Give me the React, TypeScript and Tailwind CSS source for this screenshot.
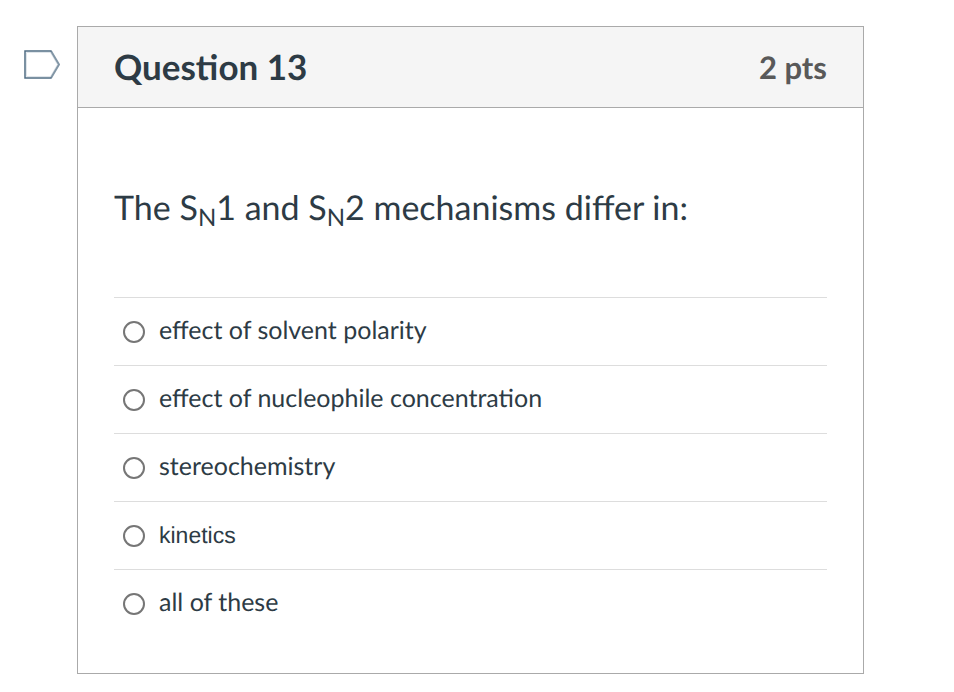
const answers = [
  { id: "solvent", text: "effect of solvent polarity" },
  { id: "nucleophile", text: "effect of nucleophile concentration" },
  { id: "stereo", text: "stereochemistry" },
  { id: "kinetics", text: "kinetics", plain: true },
  { id: "all", text: "all of these" },
];

function Sub({ children }: { children: string }) {
  return <sub className="text-[24px]">{children}</sub>;
}

export default function App() {
  return (
    <main className="flex items-start bg-white pt-[26px] pr-[90px] pb-[18px] pl-6 font-['Lato',sans-serif] text-[#2d3b45] antialiased [text-rendering:geometricPrecision]">
      {/* Flag toggle */}
      <button type="button" aria-label="Flag question" className="mt-6 mr-[17px] shrink-0">
        <svg width="36" height="29" viewBox="0 0 36 29" fill="none">
          <path d="M2.5 2.5H26.5L33.5 14.5L26.5 26.5H2.5Z" stroke="#dfe5ea" />
          <path d="M27 1L35 14.5L27 28" stroke="#8296a6" strokeWidth="2" />
          <path d="M27.5 1H1V28H27.5" stroke="#4f6c83" strokeWidth="1.5" />
        </svg>
      </button>

      <section className="min-w-0 grow border border-[#aaaaaa]">
        <header className="flex h-[81px] items-center justify-between border-b border-[#aaaaaa] bg-[#f5f5f5] px-9 font-bold">
          <h1 className="text-[35px]">Question 13</h1>
          <span className="text-[31px] text-[#595959]">2 pts</span>
        </header>

        <div className="px-9 pt-[75px] pb-9">
          <p id="prompt" className="text-[34px] leading-[50px]">
            The S<Sub>N</Sub>1 and S<Sub>N</Sub>2 mechanisms differ in:
          </p>

          <div role="radiogroup" aria-labelledby="prompt" className="mt-16">
            {answers.map((answer) => (
              <label
                key={answer.id}
                htmlFor={answer.id}
                className="flex h-[68px] items-center gap-[14px] border-t border-[#dddddd] pl-[9px]"
              >
                <input
                  id={answer.id}
                  type="radio"
                  name="answer"
                  className="size-[22px] shrink-0 appearance-none rounded-full border-2 border-[#767676] bg-white checked:border-[6px]"
                />
                <span
                  className={
                    answer.plain
                      ? "font-['Liberation_Sans',sans-serif] text-[23px]"
                      : "pb-0.5 text-[25px]"
                  }
                >
                  {answer.text}
                </span>
              </label>
            ))}
          </div>
        </div>
      </section>
    </main>
  );
}
